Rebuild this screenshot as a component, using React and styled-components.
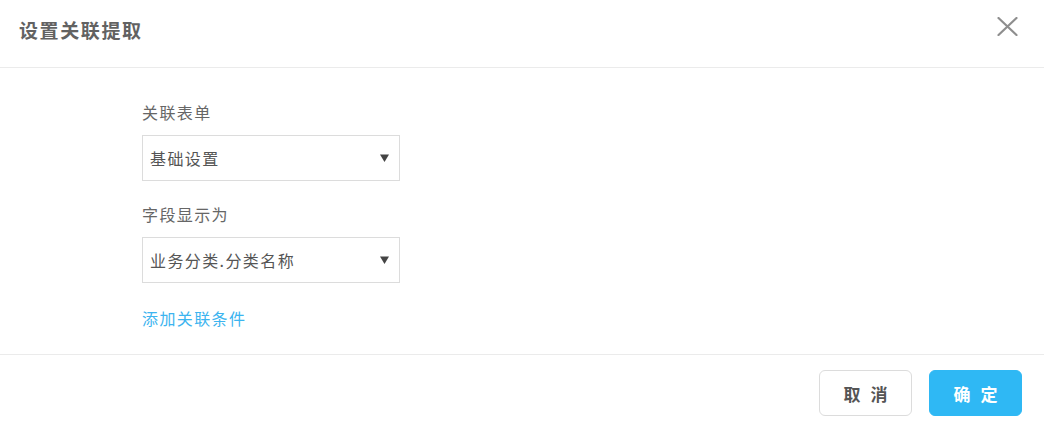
import React from 'react';
import styled, { createGlobalStyle } from 'styled-components';

const GlobalStyle = createGlobalStyle`
  html, body {
    margin: 0;
    padding: 0;
    background: #fff;
  }
  body {
    font-family: "Noto Sans CJK SC", "Noto Sans", sans-serif;
  }
`;

const Modal = styled.div`
  width: 1044px;
  height: 430px;
  display: flex;
  flex-direction: column;
  background: #fff;
`;

const Header = styled.div`
  height: 67px;
  border-bottom: 1px solid #ebebeb;
  display: flex;
  align-items: center;
  justify-content: space-between;
  padding: 0 26px 0 19px;
  box-sizing: content-box;
`;

const Title = styled.div`
  font-size: 19px;
  font-weight: 700;
  color: #626262;
  letter-spacing: 1.6px;
  margin-top: -9px;
`;

const CloseButton = styled.button`
  border: none;
  background: none;
  padding: 0;
  width: 22px;
  height: 22px;
  display: flex;
  align-items: center;
  justify-content: center;
  margin-top: -14px;
  cursor: pointer;
`;

const Body = styled.div`
  height: 287px;
  box-sizing: border-box;
  padding: 32px 0 0 142px;
  border-bottom: 1px solid #ebebeb;
`;

const Field = styled.div`
  margin-bottom: 21px;
`;

const Label = styled.div`
  font-size: 16px;
  line-height: 24px;
  color: #666;
  letter-spacing: 1.4px;
  margin-bottom: 11px;
`;

const Select = styled.div`
  width: 258px;
  height: 46px;
  box-sizing: border-box;
  border: 1px solid #dcdcdc;
  display: flex;
  align-items: center;
  justify-content: space-between;
  padding: 0 10px 0 7px;
  font-size: 16px;
  color: #555;
  letter-spacing: 1.4px;
`;

const Link = styled.a`
  display: block;
  margin-top: 23px;
  font-size: 16px;
  line-height: 24px;
  color: #3cb4ef;
  letter-spacing: 1.4px;
  text-decoration: none;
  cursor: pointer;
`;

const Footer = styled.div`
  flex: 1;
  display: flex;
  justify-content: flex-end;
  align-items: flex-start;
  gap: 17px;
  padding: 15px 22px 0 0;
`;

const Button = styled.button`
  width: 93px;
  height: 46px;
  box-sizing: border-box;
  border-radius: 6px;
  border: 1px solid ${p => (p.$primary ? '#2fb8f4' : '#dcdcdc')};
  background: ${p => (p.$primary ? '#2fb8f4' : '#fff')};
  color: ${p => (p.$primary ? '#fff' : '#555')};
  font-family: inherit;
  font-size: 17px;
  font-weight: 700;
  letter-spacing: 10px;
  padding: 0 0 0 10px;
  cursor: pointer;
`;

const Arrow = () => (
  <svg width="9" height="8" viewBox="0 0 9 8">
    <path d="M0 0.5 H9 L4.5 8 Z" fill="#444" />
  </svg>
);

const fields = [
  { label: '关联表单', value: '基础设置' },
  { label: '字段显示为', value: '业务分类.分类名称' },
];

export default function App() {
  return (
    <>
      <GlobalStyle />
      <Modal>
        <Header>
          <Title>设置关联提取</Title>
          <CloseButton aria-label="close">
            <svg width="21" height="19" viewBox="0 0 21 19">
              <path d="M1.5 1 L19.5 18 M19.5 1 L1.5 18" stroke="#8e8e8e" strokeWidth="2.2" strokeLinecap="round" />
            </svg>
          </CloseButton>
        </Header>
        <Body>
          {fields.map(f => (
            <Field key={f.label}>
              <Label>{f.label}</Label>
              <Select>
                <span>{f.value}</span>
                <Arrow />
              </Select>
            </Field>
          ))}
          <Link>添加关联条件</Link>
        </Body>
        <Footer>
          <Button>取消</Button>
          <Button $primary>确定</Button>
        </Footer>
      </Modal>
    </>
  );
}
